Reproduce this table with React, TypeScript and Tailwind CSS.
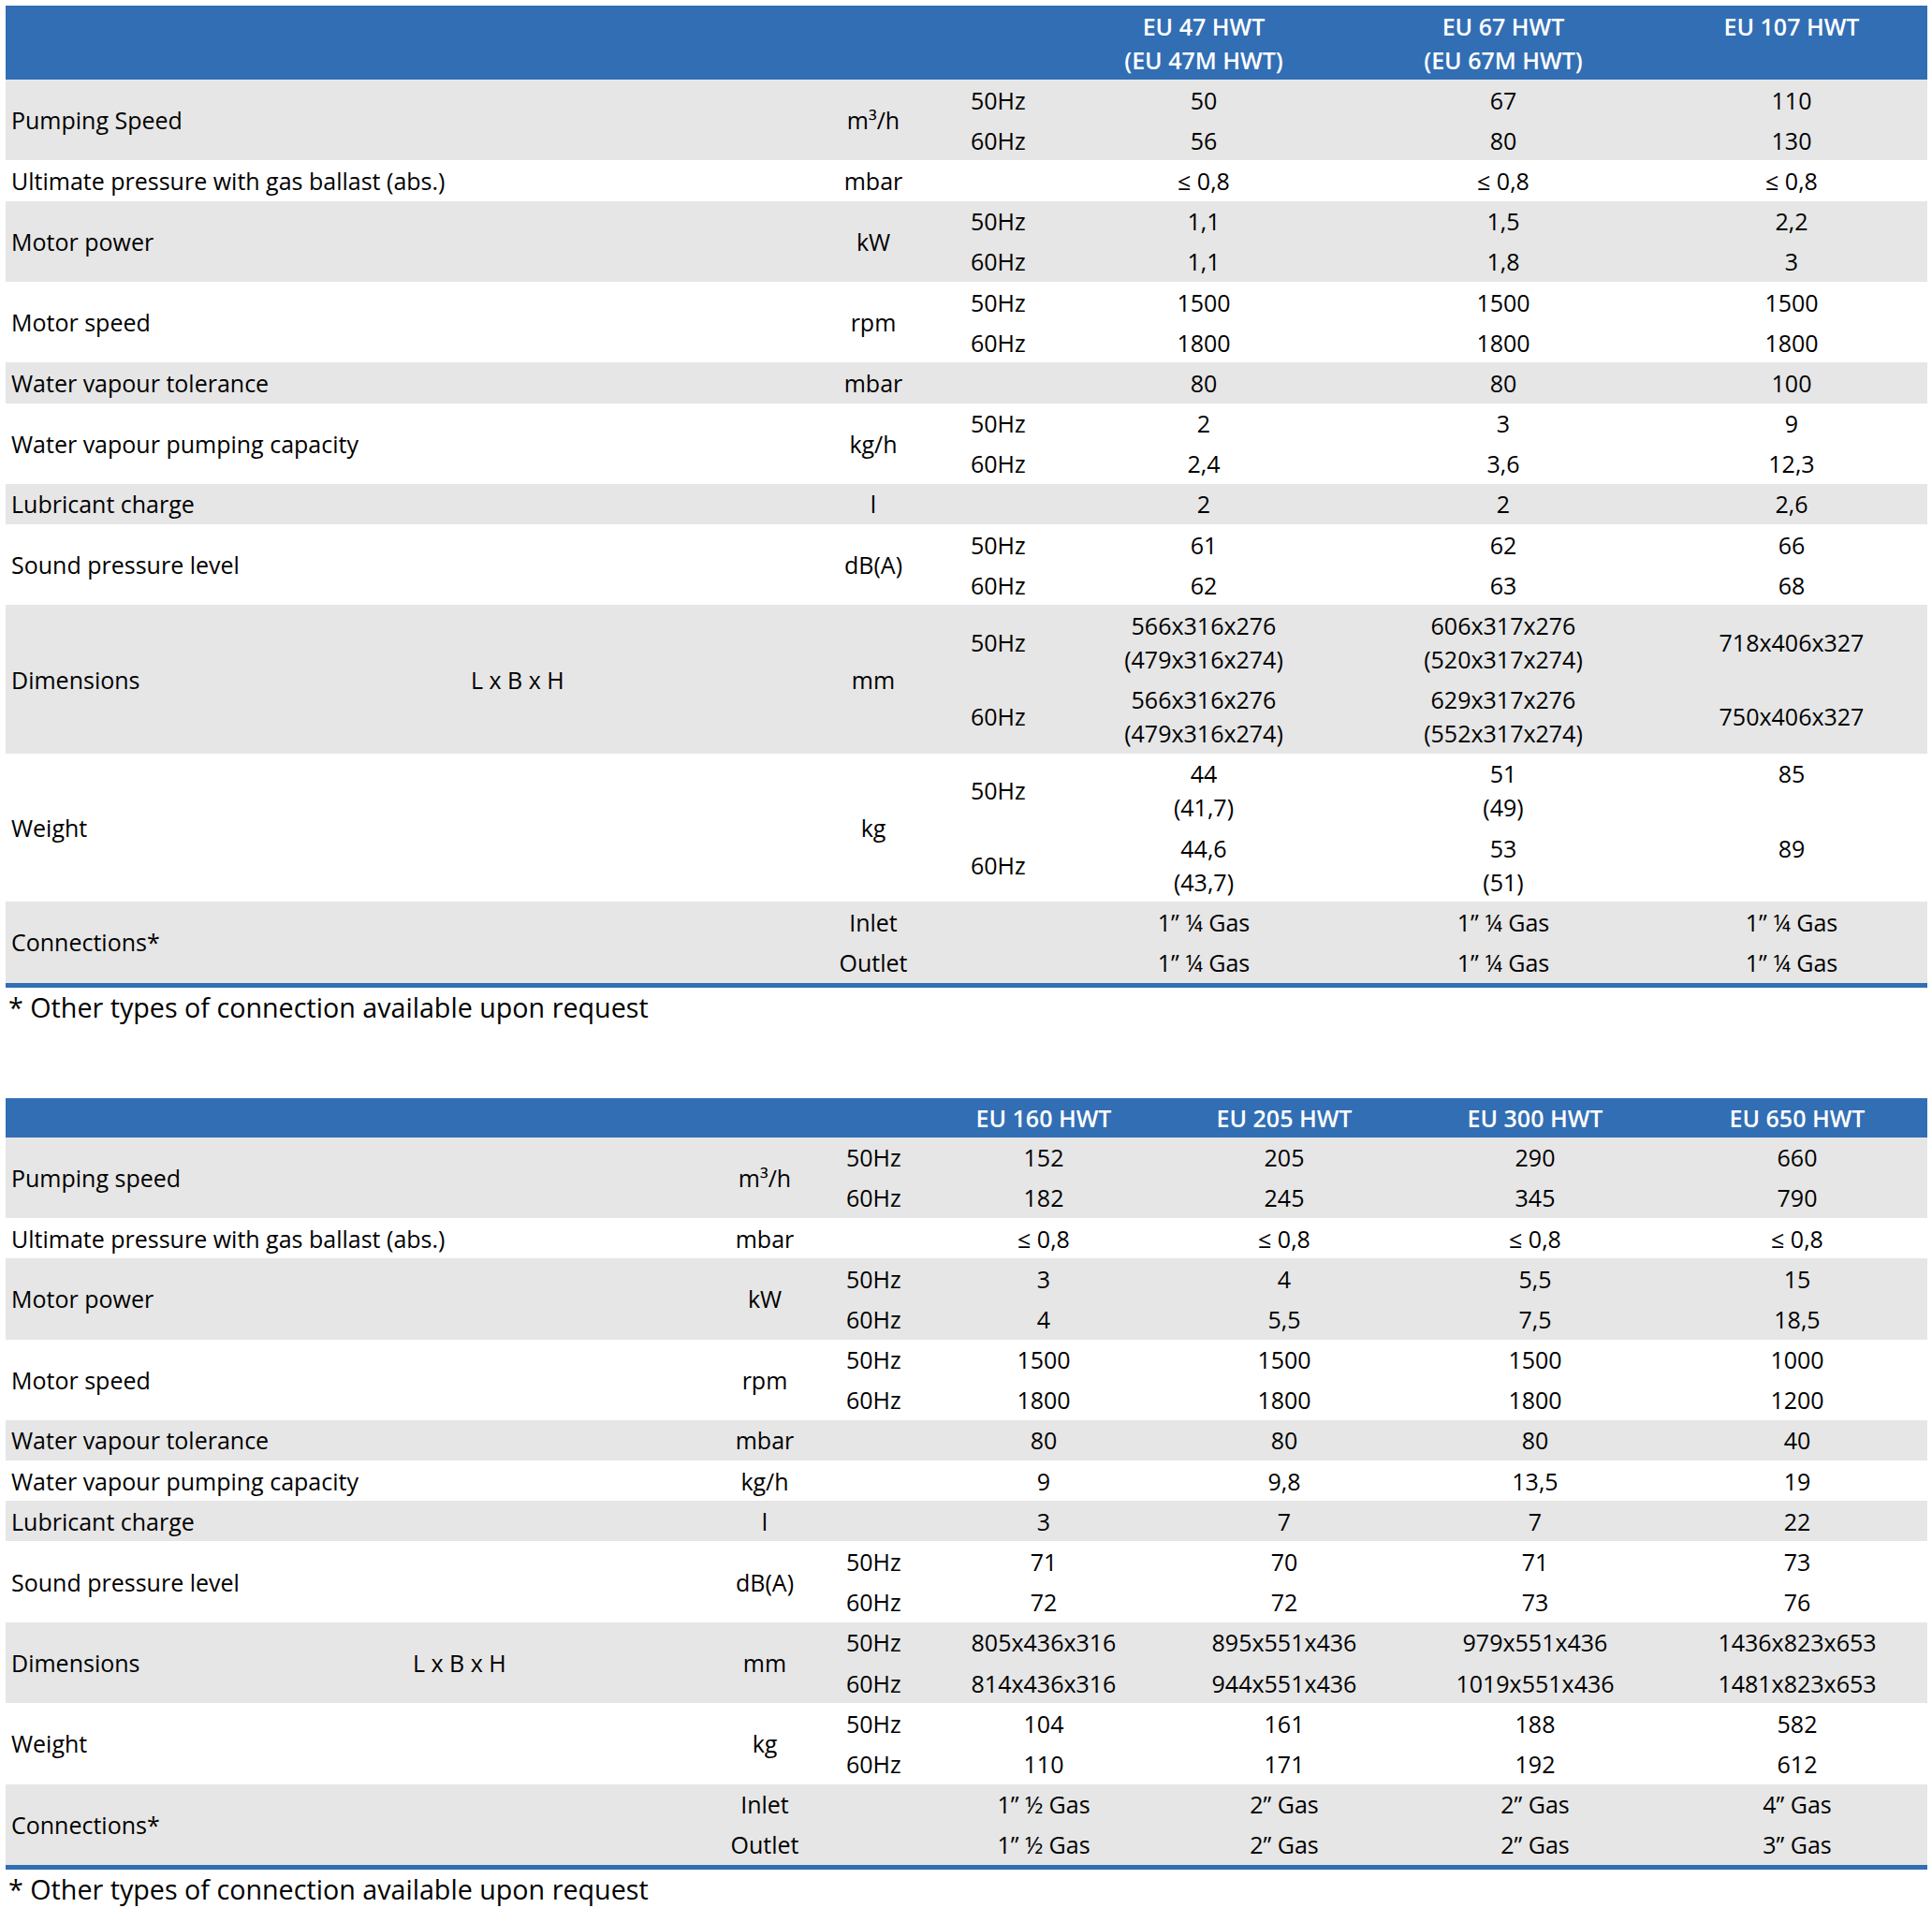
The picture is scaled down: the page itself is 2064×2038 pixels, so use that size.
import React from "react";

type Sub = { hz?: string; unit?: string; vals: string[] };
type Row = { label: string; sub?: string; unit?: string; gray: boolean; subs: Sub[]; top?: boolean };

const rows1: Row[] = [
  { label: "Pumping Speed", unit: "m³/h", gray: true, subs: [
    { hz: "50Hz", vals: ["50", "67", "110"] },
    { hz: "60Hz", vals: ["56", "80", "130"] },
  ] },
  { label: "Ultimate pressure with gas ballast (abs.)", unit: "mbar", gray: false, subs: [
    { vals: ["≤ 0,8", "≤ 0,8", "≤ 0,8"] },
  ] },
  { label: "Motor power", unit: "kW", gray: true, subs: [
    { hz: "50Hz", vals: ["1,1", "1,5", "2,2"] },
    { hz: "60Hz", vals: ["1,1", "1,8", "3"] },
  ] },
  { label: "Motor speed", unit: "rpm", gray: false, subs: [
    { hz: "50Hz", vals: ["1500", "1500", "1500"] },
    { hz: "60Hz", vals: ["1800", "1800", "1800"] },
  ] },
  { label: "Water vapour tolerance", unit: "mbar", gray: true, subs: [
    { vals: ["80", "80", "100"] },
  ] },
  { label: "Water vapour pumping capacity", unit: "kg/h", gray: false, subs: [
    { hz: "50Hz", vals: ["2", "3", "9"] },
    { hz: "60Hz", vals: ["2,4", "3,6", "12,3"] },
  ] },
  { label: "Lubricant charge", unit: "l", gray: true, subs: [
    { vals: ["2", "2", "2,6"] },
  ] },
  { label: "Sound pressure level", unit: "dB(A)", gray: false, subs: [
    { hz: "50Hz", vals: ["61", "62", "66"] },
    { hz: "60Hz", vals: ["62", "63", "68"] },
  ] },
  { label: "Dimensions", sub: "L x B x H", unit: "mm", gray: true, subs: [
    { hz: "50Hz", vals: ["566x316x276\n(479x316x274)", "606x317x276\n(520x317x274)", "718x406x327"] },
    { hz: "60Hz", vals: ["566x316x276\n(479x316x274)", "629x317x276\n(552x317x274)", "750x406x327"] },
  ] },
  { label: "Weight", unit: "kg", gray: false, top: true, subs: [
    { hz: "50Hz", vals: ["44\n(41,7)", "51\n(49)", "85"] },
    { hz: "60Hz", vals: ["44,6\n(43,7)", "53\n(51)", "89"] },
  ] },
  { label: "Connections*", gray: true, subs: [
    { unit: "Inlet", vals: ["1” ¼ Gas", "1” ¼ Gas", "1” ¼ Gas"] },
    { unit: "Outlet", vals: ["1” ¼ Gas", "1” ¼ Gas", "1” ¼ Gas"] },
  ] },
];

const rows2: Row[] = [
  { label: "Pumping speed", unit: "m³/h", gray: true, subs: [
    { hz: "50Hz", vals: ["152", "205", "290", "660"] },
    { hz: "60Hz", vals: ["182", "245", "345", "790"] },
  ] },
  { label: "Ultimate pressure with gas ballast (abs.)", unit: "mbar", gray: false, subs: [
    { vals: ["≤ 0,8", "≤ 0,8", "≤ 0,8", "≤ 0,8"] },
  ] },
  { label: "Motor power", unit: "kW", gray: true, subs: [
    { hz: "50Hz", vals: ["3", "4", "5,5", "15"] },
    { hz: "60Hz", vals: ["4", "5,5", "7,5", "18,5"] },
  ] },
  { label: "Motor speed", unit: "rpm", gray: false, subs: [
    { hz: "50Hz", vals: ["1500", "1500", "1500", "1000"] },
    { hz: "60Hz", vals: ["1800", "1800", "1800", "1200"] },
  ] },
  { label: "Water vapour tolerance", unit: "mbar", gray: true, subs: [
    { vals: ["80", "80", "80", "40"] },
  ] },
  { label: "Water vapour pumping capacity", unit: "kg/h", gray: false, subs: [
    { vals: ["9", "9,8", "13,5", "19"] },
  ] },
  { label: "Lubricant charge", unit: "l", gray: true, subs: [
    { vals: ["3", "7", "7", "22"] },
  ] },
  { label: "Sound pressure level", unit: "dB(A)", gray: false, subs: [
    { hz: "50Hz", vals: ["71", "70", "71", "73"] },
    { hz: "60Hz", vals: ["72", "72", "73", "76"] },
  ] },
  { label: "Dimensions", sub: "L x B x H", unit: "mm", gray: true, subs: [
    { hz: "50Hz", vals: ["805x436x316", "895x551x436", "979x551x436", "1436x823x653"] },
    { hz: "60Hz", vals: ["814x436x316", "944x551x436", "1019x551x436", "1481x823x653"] },
  ] },
  { label: "Weight", unit: "kg", gray: false, subs: [
    { hz: "50Hz", vals: ["104", "161", "188", "582"] },
    { hz: "60Hz", vals: ["110", "171", "192", "612"] },
  ] },
  { label: "Connections*", gray: true, subs: [
    { unit: "Inlet", vals: ["1” ½ Gas", "2” Gas", "2” Gas", "4” Gas"] },
    { unit: "Outlet", vals: ["1” ½ Gas", "2” Gas", "2” Gas", "3” Gas"] },
  ] },
];

function Body({ rows }: { rows: Row[] }) {
  return (
    <tbody>
      {rows.map((row, ri) =>
        row.subs.map((s, i) => {
          const n = row.subs.length;
          return (
            <tr key={`${ri}-${i}`} className={row.gray ? "bg-[#e6e6e6]" : "bg-white"}>
              {i === 0 && (
                <td rowSpan={n} className="pl-[6px] py-[3.6px] align-middle whitespace-nowrap">
                  {row.label}
                </td>
              )}
              {i === 0 && (
                <td rowSpan={n} className="pl-[6px] py-[3.6px] align-middle whitespace-nowrap">
                  {row.sub ?? ""}
                </td>
              )}
              {row.unit !== undefined ? (
                i === 0 && (
                  <td rowSpan={n} className="text-center py-[3.6px] align-middle">
                    {row.unit}
                  </td>
                )
              ) : (
                <td className="text-center py-[3.6px] align-middle">{s.unit ?? ""}</td>
              )}
              <td className="pl-[4px] py-[3.6px] align-middle whitespace-nowrap">{s.hz ?? ""}</td>
              {s.vals.map((v, vi) => (
                <td
                  key={vi}
                  className={`text-center py-[3.6px] whitespace-nowrap ${row.top ? "align-top" : "align-middle"}`}
                >
                  {v.split("\n").map((line, li) => (
                    <div key={li}>{line}</div>
                  ))}
                </td>
              ))}
            </tr>
          );
        })
      )}
    </tbody>
  );
}

function Footnote({ className = "" }: { className?: string }) {
  return (
    <div className={`pl-[3px] text-[28.7px] leading-[40px] text-black whitespace-nowrap ${className}`}>
      * Other types of connection available upon request
    </div>
  );
}

export default function App() {
  return (
    <div className="bg-white min-h-[2038px] w-[2064px] pt-[6px] pl-[6px] font-['Open_Sans',sans-serif] text-[25px] leading-[36px] text-black">
      <div className="w-[2053px] border-b-[5px] border-[#326eb4]">
        <table className="w-[2053px] table-fixed border-collapse">
          <colgroup>
            <col className="w-[491px]" />
            <col className="w-[336px]" />
            <col className="w-[200px]" />
            <col className="w-[96px]" />
            <col className="w-[314px]" />
            <col className="w-[326px]" />
            <col className="w-[290px]" />
          </colgroup>
          <thead>
            <tr className="bg-[#326eb4] text-white">
              <th className="py-[3.5px]" />
              <th />
              <th />
              <th />
              <th className="py-[3.5px] align-top text-center font-semibold whitespace-nowrap">
                <div>EU 47 HWT</div>
                <div>(EU 47M HWT)</div>
              </th>
              <th className="py-[3.5px] align-top text-center font-semibold whitespace-nowrap">
                <div>EU 67 HWT</div>
                <div>(EU 67M HWT)</div>
              </th>
              <th className="py-[3.5px] align-top text-center font-semibold whitespace-nowrap">
                <div>EU 107 HWT</div>
              </th>
            </tr>
          </thead>
          <Body rows={rows1} />
        </table>
      </div>
      <Footnote className="mt-[1px]" />

      <div className="mt-[77px] w-[2053px] border-b-[5px] border-[#326eb4]">
        <table className="w-[2053px] table-fixed border-collapse">
          <colgroup>
            <col className="w-[429px]" />
            <col className="w-[299px]" />
            <col className="w-[166px]" />
            <col className="w-[85px]" />
            <col className="w-[260px]" />
            <col className="w-[254px]" />
            <col className="w-[282px]" />
            <col className="w-[278px]" />
          </colgroup>
          <thead>
            <tr className="bg-[#326eb4] text-white">
              <th className="py-[3px]" />
              <th />
              <th />
              <th />
              <th className="py-[3px] text-center font-semibold whitespace-nowrap">EU 160 HWT</th>
              <th className="py-[3px] text-center font-semibold whitespace-nowrap">EU 205 HWT</th>
              <th className="py-[3px] text-center font-semibold whitespace-nowrap">EU 300 HWT</th>
              <th className="py-[3px] text-center font-semibold whitespace-nowrap">EU 650 HWT</th>
            </tr>
          </thead>
          <Body rows={rows2} />
        </table>
      </div>
      <Footnote className="mt-[1px]" />
    </div>
  );
}
